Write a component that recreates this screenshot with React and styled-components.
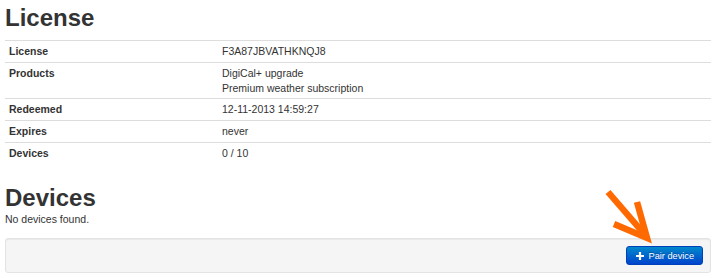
import React from 'react';
import styled, {createGlobalStyle} from "styled-components";

const GlobalStyle = createGlobalStyle`
  body {
    margin: 0;
    padding: 4px 5px 0;
    background: #fff;
    color: #333;
    font-family: "Liberation Sans", Arial, sans-serif;
    font-size: 10.5px;
    line-height: 15px;
  }
`;

const Page = styled.div`
  position: relative;
`;

const Heading = styled.h1`
  margin: ${(props) => (props.$first ? "0 0 8px" : "20px 0 0")};
  font-size: 24px;
  line-height: 28px;
  font-weight: bold;
  color: #333;
`;

const InfoTable = styled.table`
  width: 100%;
  border-collapse: collapse;
  border-spacing: 0;
`;

const Cell = styled.td`
  padding: 3px 4px;
  border-top: 1px solid #ddd;
  vertical-align: top;
  text-align: left;
  font-weight: ${(props) => (props.$label ? "bold" : "normal")};
  width: ${(props) => (props.$label ? "205px" : "auto")};
`;

const ValueLine = styled.div`
  line-height: ${(props) => (props.$multi ? "14.5px" : "15px")};
`;

const Empty = styled.p`
  margin: 0 0 11px;
`;

const Well = styled.div`
  display: flex;
  justify-content: flex-end;
  padding: 7px;
  background: #f5f5f5;
  border: 1px solid #e3e3e3;
  border-radius: 3px;
  box-shadow: inset 0 1px 1px rgba(0, 0, 0, 0.05);
`;

const PrimaryButton = styled.button`
  display: flex;
  align-items: center;
  gap: 5px;
  height: 19px;
  padding: 0 8px 0 9px;
  font-family: "Liberation Sans", Arial, sans-serif;
  font-size: 9.2px;
  color: #fff;
  text-shadow: 0 -1px 0 rgba(0, 0, 0, 0.25);
  background: linear-gradient(to bottom, #0088cc, #0044cc);
  border: 1px solid #0040b8;
  border-radius: 3px;
  cursor: pointer;
`;

const Arrow = styled.svg`
  position: absolute;
  left: 595px;
  top: 182px;
  pointer-events: none;
`;

const rows = [
  ["License", ["F3A87JBVATHKNQJ8"]],
  ["Products", ["DigiCal+ upgrade", "Premium weather subscription"]],
  ["Redeemed", ["12-11-2013 14:59:27"]],
  ["Expires", ["never"]],
  ["Devices", ["0 / 10"]],
];

export default function App() {
  return (
    <Page>
      <GlobalStyle/>
      <Heading $first>License</Heading>
      <InfoTable>
        <tbody>
          {rows.map(([label, values]) => (
            <tr key={label}>
              <Cell $label>{label}</Cell>
              <Cell>
                {values.map((v) => <ValueLine key={v} $multi={values.length > 1}>{v}</ValueLine>)}
              </Cell>
            </tr>
          ))}
        </tbody>
      </InfoTable>

      <Heading>Devices</Heading>
      <Empty>No devices found.</Empty>
      <Well>
        <PrimaryButton>
          <svg width="8" height="8" viewBox="0 0 8 8">
            <path d="M4 0v8M0 4h8" stroke="#fff" strokeWidth="2.2"/>
          </svg>
          Pair device
        </PrimaryButton>
      </Well>

      {/* orange pointer arrow over the button */}
      <Arrow width="60" height="60" viewBox="0 0 60 60">
        <g fill="none" stroke="#ff6a00" strokeWidth="6.5" strokeLinejoin="miter" strokeMiterlimit="10">
          <path d="M8 6L46 50"/>
          <path d="M14 38L47 52L37 16"/>
        </g>
      </Arrow>
    </Page>
  )
}
